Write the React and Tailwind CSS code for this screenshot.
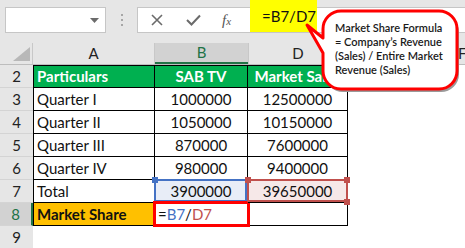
import React from "react";

const rows = [
  { n: 3, name: "Quarter I", b: "1000000", d: "12500000" },
  { n: 4, name: "Quarter II", b: "1050000", d: "10150000" },
  { n: 5, name: "Quarter III", b: "870000", d: "7600000" },
  { n: 6, name: "Quarter IV", b: "980000", d: "9400000" },
];

const RowHead = ({ n, active }) => (
  <div
    className={`h-[23px] shrink-0 flex items-center justify-center border-b border-[#d4d4d4] text-[15px] ${
      active
        ? "bg-[#d2d2d2] text-[#217346] border-r-2 border-r-[#217346]"
        : "bg-[#e6e6e6] text-[#222]"
    }`}
  >
    {n}
  </div>
);

const Handle = ({ className }) => (
  <div className={`absolute w-[6px] h-[6px] ${className}`} />
);

const cell = "h-[23px] shrink-0 border-r border-b border-black flex items-center";

export default function App() {
  return (
    <div className="relative flex flex-col w-[465px] h-[248px] overflow-hidden bg-white font-['Lato',sans-serif] text-[#111]">
      {/* Toolbar */}
      <div className="h-[43px] shrink-0 bg-[#e6e6e6] flex items-start pt-[7px] pl-[5px]">
        <div className="w-[101px] h-[26px] bg-white border border-[#c6c6c6] flex items-center justify-end pr-[6px]">
          <svg width="9" height="5" viewBox="0 0 9 5">
            <path d="M0 0h9L4.5 5z" fill="#6b6b6b" />
          </svg>
        </div>
        <div className="w-[31px] h-[26px] flex flex-col items-center justify-center gap-[3px]">
          <span className="w-[2px] h-[2px] bg-[#a6a6a6]" />
          <span className="w-[2px] h-[2px] bg-[#a6a6a6]" />
          <span className="w-[2px] h-[2px] bg-[#a6a6a6]" />
        </div>
        <div className="relative flex-1 h-[26px] bg-white border border-[#c6c6c6] border-r-0 flex items-center">
          <svg width="12" height="12" viewBox="0 0 12 12" className="ml-[13px]">
            <path d="M1 1l10 10M11 1L1 11" stroke="#6b6b6b" strokeWidth="1.6" />
          </svg>
          <svg width="15" height="12" viewBox="0 0 15 12" className="ml-[23px]">
            <path d="M1 6l4.5 4.5L14 1.5" stroke="#6b6b6b" strokeWidth="2" fill="none" />
          </svg>
          <span className="ml-[21px] font-['Liberation_Serif',serif] italic text-[15px] text-[#555] leading-none">
            f<span className="text-[11px]">x</span>
          </span>
          <div className="absolute left-[112px] -top-[8px] w-[67px] h-[32px] bg-[#ffff00] flex items-center pl-[12px] text-[15px] text-[#111]">
            =B7/D7
          </div>
        </div>
      </div>

      {/* Column header row */}
      <div className="flex h-[22px] shrink-0 bg-[#e6e6e6] border-b border-[#bdbdbd] text-[15px] text-[#222]">
        <div className="w-[33px] shrink-0 relative border-r border-[#c8c8c8]">
          <svg width="17" height="14" viewBox="0 0 17 14" className="absolute right-[2px] bottom-[3px]">
            <path d="M17 0V14H0z" fill="#b8b8b8" />
          </svg>
        </div>
        <div className="w-[122px] shrink-0 flex items-center justify-center border-r border-[#c8c8c8]">A</div>
        <div className="w-[93px] shrink-0 flex items-center justify-center bg-[#d2d2d2] border-b-2 border-[#217346] text-[#217346]">
          B
        </div>
        <div className="w-[100px] shrink-0 flex items-center justify-center border-l border-r border-[#c8c8c8]">D</div>
        <div className="w-[98px] shrink-0 flex items-center justify-center border-r border-[#c8c8c8]">E</div>
        <div className="flex-1 flex items-center pl-[12px]">F</div>
      </div>

      {/* Body: row headers + columns */}
      <div className="flex flex-1 text-[15px]">
        <div className="w-[33px] shrink-0 flex flex-col bg-[#e6e6e6]">
          {[2, 3, 4, 5, 6, 7].map((n) => (
            <RowHead key={n} n={n} />
          ))}
          <RowHead n={8} active />
          <RowHead n={9} />
        </div>

        {/* Column A */}
        <div className="w-[122px] shrink-0 flex flex-col border-l border-black self-start">
          <div className={`${cell} border-t bg-[#00b050] pl-[3px] text-white font-bold`}>Particulars</div>
          {rows.map((r) => (
            <div key={r.n} className={`${cell} pl-[3px]`}>{r.name}</div>
          ))}
          <div className={`${cell} pl-[3px]`}>Total</div>
          <div className={`${cell} bg-[#ffc000] pl-[3px] font-bold`}>Market Share</div>
        </div>

        {/* Column B */}
        <div className="w-[93px] shrink-0 flex flex-col self-start">
          <div className={`${cell} border-t bg-[#00b050] justify-center text-white font-bold`}>SAB TV</div>
          {rows.map((r) => (
            <div key={r.n} className={`${cell} justify-center`}>{r.b}</div>
          ))}
          <div className={`${cell} relative bg-[#e8edf7] justify-center`}>
            <div className="absolute -left-[1px] -top-[1px] w-[93px] h-[23px] border-2 border-[#4472c4]" />
            <Handle className="-left-[3px] -top-[3px] bg-[#4472c4]" />
            3900000
          </div>
          <div className={`${cell} relative pl-[3px]`}>
            <div className="absolute -left-[2px] -top-[2px] w-[97px] h-[26px] border-[3px] border-[#ff0000]" />
            <span>=</span>
            <span className="text-[#4472c4]">B7</span>
            <span>/</span>
            <span className="text-[#c0504d]">D7</span>
          </div>
        </div>

        {/* Column D */}
        <div className="w-[100px] shrink-0 flex flex-col self-start">
          <div className={`${cell} border-t bg-[#00b050] justify-center text-white font-bold whitespace-nowrap overflow-hidden`}>
            Market Sales
          </div>
          {rows.map((r) => (
            <div key={r.n} className={`${cell} justify-center`}>{r.d}</div>
          ))}
          <div className={`${cell} relative bg-[#f6e8e8] justify-center`}>
            <div className="absolute -left-[1px] -top-[1px] w-[101px] h-[23px] border-2 border-[#c0504d]" />
            <Handle className="-left-[3px] -top-[3px] bg-[#c0504d]" />
            <Handle className="-right-[3px] -top-[3px] bg-[#c0504d]" />
            <Handle className="-right-[3px] -bottom-[3px] bg-[#c0504d]" />
            39650000
          </div>
          <div className={cell} />
        </div>
      </div>

      {/* Callout */}
      <svg
        width="165"
        height="95"
        viewBox="0 0 165 95"
        className="absolute left-[300px] top-0"
      >
        <path
          d="M41 11H139a18 18 0 0 1 18 18V71a18 18 0 0 1-18 18H41a18 18 0 0 1-18-18V53L7 25l16 13V29a18 18 0 0 1 18-18z"
          fill="#9a9a9a"
          transform="translate(2 3)"
        />
        <path
          d="M41 11H139a18 18 0 0 1 18 18V71a18 18 0 0 1-18 18H41a18 18 0 0 1-18-18V53L7 25l16 13V29a18 18 0 0 1 18-18z"
          fill="#fff"
          stroke="#ff0000"
          strokeWidth="3"
          strokeLinejoin="round"
        />
      </svg>
      <div className="absolute left-[335px] top-[21px] text-[11px] leading-[14px] font-semibold text-[#1a1a1a] whitespace-nowrap">
        <div>Market Share Formula</div>
        <div>= Company’s Revenue</div>
        <div>(Sales) / Entire Market</div>
        <div>Revenue (Sales)</div>
      </div>
    </div>
  );
}
